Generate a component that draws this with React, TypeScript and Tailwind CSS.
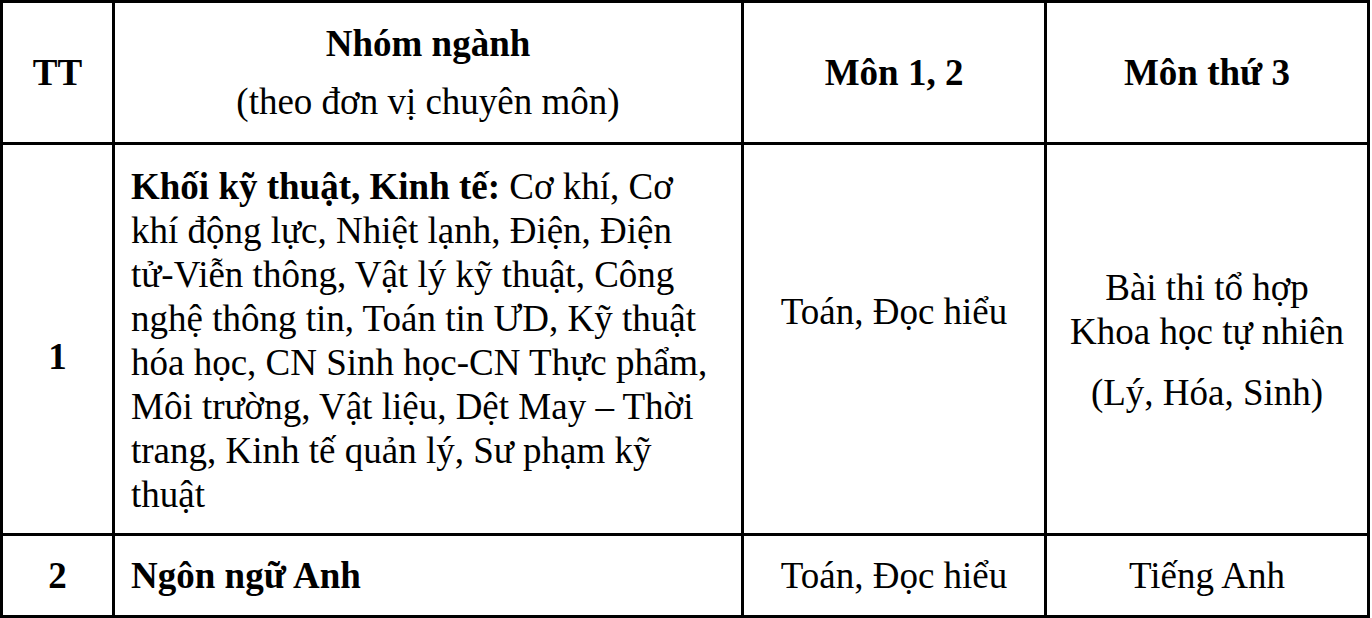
function Cell({
  className = '',
  children,
}: {
  className?: string;
  children?: React.ReactNode;
}) {
  return (
    <div className={`border-r-[3px] border-b-[3px] border-black ${className}`}>
      {children}
    </div>
  );
}

export default function App() {
  return (
    <div className="bg-white w-[1372px] h-[618px] overflow-hidden">
      <div className="font-['Liberation_Serif','Times_New_Roman',serif] text-[37px] leading-[44px] text-black grid grid-cols-[112px_629px_303px_323px] grid-rows-[142px_391px_82px] border-l-[3px] border-t-[3px] border-black w-[1370px]">
        {/* header */}
        <Cell className="flex items-center justify-center font-bold">TT</Cell>
        <Cell className="flex flex-col items-center justify-center text-center">
          <p className="font-bold">Nhóm ngành</p>
          <p className="mt-[14px]">(theo đơn vị chuyên môn)</p>
        </Cell>
        <Cell className="flex items-center justify-center font-bold">Môn 1, 2</Cell>
        <Cell className="flex items-center justify-center font-bold">Môn thứ 3</Cell>

        {/* row 1 */}
        <Cell className="text-center font-bold pt-[190px]">1</Cell>
        <Cell className="pt-[20px] pl-[16px] pr-[12px]">
          <p>
            <b>Khối kỹ thuật, Kinh tế:</b> Cơ khí, Cơ
            <br />
            khí động lực, Nhiệt lạnh, Điện, Điện
            <br />
            tử-Viễn thông, Vật lý kỹ thuật, Công
            <br />
            nghệ thông tin, Toán tin ƯD, Kỹ thuật
            <br />
            hóa học, CN Sinh học-CN Thực phẩm,
            <br />
            Môi trường, Vật liệu, Dệt May – Thời
            <br />
            trang, Kinh tế quản lý, Sư phạm kỹ
            <br />
            thuật
          </p>
        </Cell>
        <Cell className="text-center pt-[145px]">Toán, Đọc hiểu</Cell>
        <Cell className="text-center pt-[121px]">
          <p>
            Bài thi tổ hợp
            <br />
            Khoa học tự nhiên
          </p>
          <p className="mt-[17px]">(Lý, Hóa, Sinh)</p>
        </Cell>

        {/* row 2 */}
        <Cell className="flex items-center justify-center font-bold">2</Cell>
        <Cell className="flex items-center pl-[16px] font-bold">Ngôn ngữ Anh</Cell>
        <Cell className="flex items-center justify-center">Toán, Đọc hiểu</Cell>
        <Cell className="flex items-center justify-center">Tiếng Anh</Cell>
      </div>
    </div>
  );
}
